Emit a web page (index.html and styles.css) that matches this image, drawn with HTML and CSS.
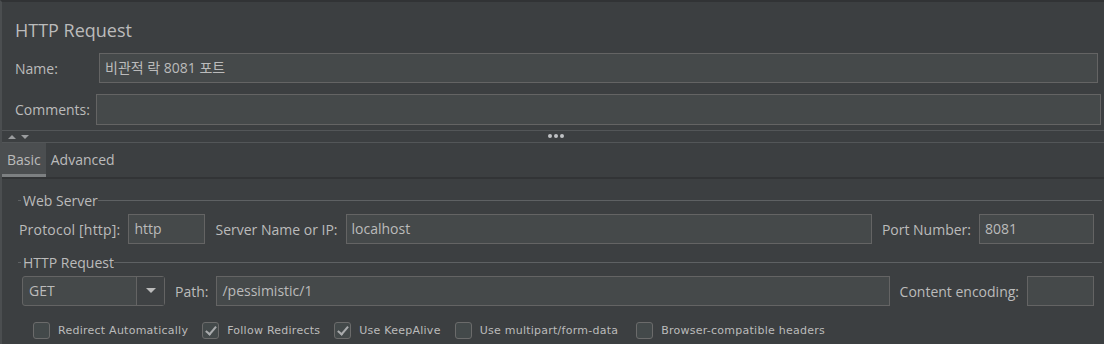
FILE: index.html
```html
<!DOCTYPE html>
<html lang="en">
<head>
  <meta charset="UTF-8">
  <title>HTTP Request</title>
  <link rel="stylesheet" href="styles.css">
</head>
<body>
  <div class="panel">
    <!-- Header -->
    <div class="header">
      <h1 class="title">HTTP Request</h1>
      <div class="field-row name-row">
        <label class="label">Name:</label>
        <div class="input grow">비관적 락 8081 포트</div>
      </div>
      <div class="field-row comments-row">
        <label class="label">Comments:</label>
        <div class="input grow"></div>
      </div>
    </div>

    <!-- Splitter -->
    <div class="splitter">
      <div class="arrows">
        <svg width="24" height="8" viewBox="0 0 24 8">
          <path d="M2 6 L6 2 L10 6 Z" fill="#9a9c9e"/>
          <path d="M15 2 L23 2 L19 6 Z" fill="#9a9c9e"/>
        </svg>
      </div>
      <div class="dots"><span></span><span></span><span></span></div>
    </div>

    <!-- Tabs -->
    <div class="tabs">
      <div class="tab active">Basic</div>
      <div class="tab">Advanced</div>
    </div>

    <div class="tab-body">
      <!-- Web Server -->
      <div class="group">
        <div class="group-title"><span>Web Server</span></div>
        <div class="field-row">
          <label class="label first">Protocol [http]:</label>
          <div class="input protocol">http</div>
          <label class="label">Server Name or IP:</label>
          <div class="input grow">localhost</div>
          <label class="label">Port Number:</label>
          <div class="input port">8081</div>
        </div>
      </div>

      <!-- HTTP Request -->
      <div class="group">
        <div class="group-title"><span>HTTP Request</span></div>
        <div class="field-row">
          <div class="select">
            <div class="select-value">GET</div>
            <div class="select-button">
              <svg width="12" height="8" viewBox="0 0 12 8"><path d="M1 1 L11 1 L6 6 Z" fill="#bbbbbb"/></svg>
            </div>
          </div>
          <label class="label">Path:</label>
          <div class="input grow">/pessimistic/1</div>
          <label class="label">Content encoding:</label>
          <div class="input encoding"></div>
        </div>
      </div>

      <!-- Options -->
      <div class="checks">
        <label class="check"><span class="box"></span>Redirect Automatically</label>
        <label class="check"><span class="box checked"></span>Follow Redirects</label>
        <label class="check"><span class="box checked"></span>Use KeepAlive</label>
        <label class="check"><span class="box"></span>Use multipart/form-data</label>
        <label class="check"><span class="box"></span>Browser-compatible headers</label>
      </div>
    </div>
  </div>
</body>
</html>
```

FILE: styles.css
```css
/* General Reset */
* {
  margin: 0;
  padding: 0;
  box-sizing: border-box;
}

body {
  background-color: #3c3f41;
  color: #bbbbbb;
  font-family: "Open Sans", "Noto Sans CJK KR", sans-serif;
  font-size: 14px;
  width: 1104px;
  height: 344px;
  overflow: hidden;
}

.panel {
  height: 100%;
  border-top: 2px solid #313335;
  border-left: 2px solid #4b4e50;
}

/* Header */
.header {
  padding: 15px 3px 5px 13px;
}

.title {
  font-weight: normal;
  font-size: 18px;
  line-height: 26px;
  margin-bottom: 10px;
}

.field-row {
  display: flex;
  align-items: center;
}

.name-row {
  height: 30px;
  margin-bottom: 11px;
  padding-right: 3px;
}

.name-row .label {
  width: 84px;
}

.comments-row {
  height: 31px;
}

.comments-row .label {
  width: 81px;
}

.label {
  white-space: nowrap;
}

.input {
  height: 30px;
  line-height: 28px;
  padding: 0 5px;
  background-color: #45494a;
  border: 1px solid #646464;
  white-space: nowrap;
  overflow: hidden;
}

.comments-row .input {
  height: 31px;
}

.grow {
  flex: 1;
}

/* Splitter */
.splitter {
  position: relative;
  height: 13px;
  border-top: 1px solid #535658;
  border-bottom: 1px solid #535658;
  display: flex;
  align-items: center;
}

.arrows {
  display: flex;
  padding-left: 4px;
}

.dots {
  position: absolute;
  left: 546px;
  top: 3px;
  display: flex;
  gap: 2px;
}

.dots span {
  width: 4px;
  height: 4px;
  border-radius: 2px;
  background-color: #c0c2c4;
}

/* Tabs */
.tabs {
  display: flex;
  height: 36px;
  border-bottom: 2px solid #323436;
}

.tab {
  padding: 3px 5px 0;
  font-size: 14px;
  line-height: 28px;
  border-bottom: 3px solid transparent;
}

.tab.active {
  background-color: #4b4e50;
  border-bottom-color: #7d8082;
}

/* Tab body */
.tab-body {
  padding: 11px 10px 0 15px;
}

.group {
  margin-bottom: 8px;
}

.group-title {
  display: flex;
  align-items: center;
  height: 20px;
  padding-left: 6px;
  margin-bottom: 4px;
}

.group-title::before {
  content: "";
  width: 3px;
  height: 1px;
  background-color: #5e6163;
  margin-left: -5px;
  margin-right: 2px;
}

.group-title::after {
  content: "";
  flex: 1;
  height: 1px;
  margin-right: -8px;
  background-color: #5e6163;
}

.group-title span {
  font-size: 14px;
}

.group .field-row {
  padding-left: 2px;
}

.group .label {
  margin: 0 8px 0 10px;
}

.group .label.first {
  margin-left: 0;
  margin-right: 8px;
  letter-spacing: 0.2px;
}

.protocol {
  width: 77px;
}

.port {
  width: 115px;
}

.encoding {
  width: 67px;
}

.select {
  display: flex;
  width: 143px;
  height: 30px;
  margin-left: 3px;
  border: 1px solid #646464;
  border-radius: 3px;
  background-color: #45494a;
}

.select-value {
  flex: 1;
  padding-left: 6px;
  line-height: 28px;
}

.select-button {
  width: 28px;
  border-left: 1px solid #646464;
  display: flex;
  align-items: center;
  justify-content: center;
  background-color: #3f4244;
}

/* Checkboxes */
.checks {
  display: flex;
  padding-left: 16px;
  margin-top: 16px;
  font-family: "DejaVu Sans", sans-serif;
  font-size: 11px;
  letter-spacing: 0.25px;
}

.check {
  display: flex;
  align-items: center;
  margin-right: 14px;
}

.check:last-child {
  margin-left: 4px;
}

.box {
  width: 17px;
  height: 17px;
  border: 1px solid #6b6b6b;
  border-radius: 3px;
  background-color: #43494a;
  margin-right: 8px;
  position: relative;
}

.box.checked::after {
  content: "";
  position: absolute;
  left: 5px;
  top: 1px;
  width: 4px;
  height: 9px;
  border-right: 2px solid #a9abad;
  border-bottom: 2px solid #a9abad;
  transform: rotate(40deg);
}
```
